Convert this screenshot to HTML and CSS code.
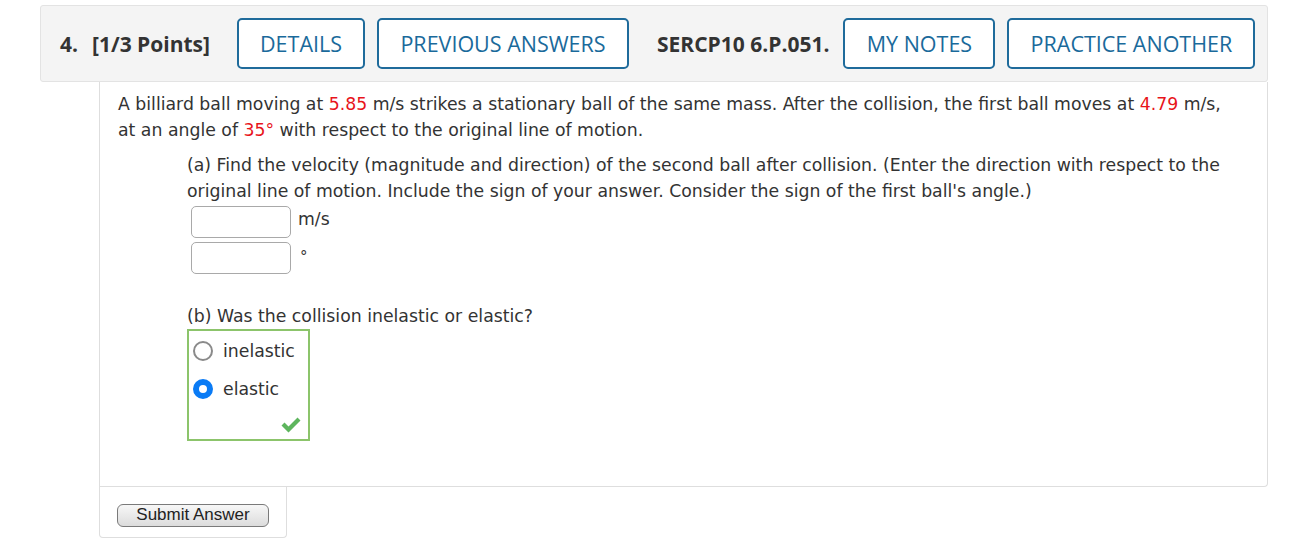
FILE: index.html
```html
<!DOCTYPE html>
<html>
<head>
<meta charset="utf-8">
<link rel="stylesheet" href="styles.css">
</head>
<body>
<div class="question">
  <div class="qhead">
    <span class="qnum">4.</span>
    <span class="qpts">[1/3 Points]</span>
    <span class="btn btn-details">DETAILS</span>
    <span class="btn btn-prev">PREVIOUS ANSWERS</span>
    <span class="qcode">SERCP10 6.P.051.</span>
    <span class="btn btn-notes">MY NOTES</span>
    <span class="btn btn-practice">PRACTICE ANOTHER</span>
  </div>
  <div class="qbody">
    <p class="stem">A billiard ball moving at <span class="red">5.85</span> m/s strikes a stationary ball of the same mass. After the collision, the first ball moves at <span class="red">4.79</span> m/s, at an angle of <span class="red">35°</span> with respect to the original line of motion.</p>
    <div class="part">
      <p class="ptext">(a) Find the velocity (magnitude and direction) of the second ball after collision. (Enter the direction with respect to the original line of motion. Include the sign of your answer. Consider the sign of the first ball's angle.)</p>
      <div class="ansrow"><span class="inp"></span><span class="unit">m/s</span></div>
      <div class="ansrow"><span class="inp"></span><span class="unit deg">°</span></div>
      <p class="ptext pb">(b) Was the collision inelastic or elastic?</p>
      <div class="choices">
        <div class="choice"><span class="radio"></span><span class="clabel">inelastic</span></div>
        <div class="choice"><span class="radio on"></span><span class="clabel">elastic</span></div>
        <svg class="check" width="22" height="18" viewBox="0 0 22 18"><path d="M1.5 9.5 L4.5 6.5 L8.5 10.5 L17.5 1.5 L20.5 4.5 L8.5 16.5 Z" fill="#5db55d"/></svg>
      </div>
    </div>
  </div>
  <div class="qfoot">
    <span class="submit">Submit Answer</span>
  </div>
</div>
</body>
</html>
```

FILE: styles.css
```css
html, body {
  margin: 0;
  padding: 0;
  background: #fff;
}
.question {
  padding-top: 5px;
  width: 1290px;
}
.qhead {
  margin-left: 40px;
  width: 1226px;
  height: 75px;
  box-sizing: content-box;
  background: #f4f4f4;
  border: 1px solid #e3e3e3;
  border-radius: 3px;
  display: flex;
  align-items: center;
  font-family: "Open Sans", sans-serif;
  color: #333;
}
.qnum {
  font-weight: 700;
  font-size: 21px;
  margin-left: 19px;
}
.qpts {
  font-weight: 700;
  font-size: 21px;
  margin-left: 14px;
  margin-right: 27px;
}
.qcode {
  font-weight: 700;
  font-size: 21px;
  margin-left: 28px;
  margin-right: 14px;
}
.btn {
  box-sizing: border-box;
  height: 51px;
  border: 2px solid #1f6b9b;
  border-radius: 5px;
  color: #1a6a9b;
  font-size: 21.5px;
  display: flex;
  align-items: center;
  justify-content: center;
  background: #fff;
}
.btn-details { width: 128px; }
.btn-prev { width: 252px; margin-left: 12px; }
.btn-notes { width: 152px; }
.btn-practice { width: 248px; margin-left: 12px; }

.qbody {
  margin-left: 99px;
  width: 1149px;
  border-left: 1px solid #dedede;
  border-right: 1px solid #dedede;
  border-bottom: 1px solid #dedede;
  border-bottom-right-radius: 4px;
  padding: 9px 0 45px 18px;
  box-sizing: content-box;
  font-family: "DejaVu Sans", Verdana, sans-serif;
  font-size: 17.3px;
  line-height: 26px;
  color: #333;
}
.qbody p { margin: 0; }
.red { color: #e8141b; }
.qbody .stem { padding-right: 25px; }
.part {
  margin-left: 69px;
  margin-top: 9px;
}
.qbody .ptext { padding-right: 40px; }
.ansrow {
  display: flex;
  align-items: flex-start;
  margin-left: 4px;
  margin-top: 2px;
  height: 32px;
}
.ansrow + .ansrow { margin-top: 4px; }
.inp {
  box-sizing: border-box;
  width: 100px;
  height: 32px;
  border: 1px solid #a9a9a9;
  border-radius: 5px;
  background: #fff;
}
.unit {
  margin-left: 7px;
  line-height: 26px;
}
.deg { margin-left: 9px; font-size: 15px; line-height: 30px; }
.qbody .pb { margin-top: 29px; }
.choices {
  position: relative;
  box-sizing: border-box;
  width: 123px;
  height: 112px;
  border: 2px solid #8cc46b;
  padding-top: 7px;
}
.choice {
  display: flex;
  align-items: center;
  height: 26px;
  margin-left: 4px;
}
.choice + .choice { margin-top: 12px; }
.radio {
  box-sizing: border-box;
  width: 20px;
  height: 20px;
  border-radius: 50%;
  border: 2px solid #8a8a8a;
  background: #fff;
}
.radio.on {
  border: 6px solid #0a7bf5;
}
.clabel { margin-left: 10px; }
.check {
  position: absolute;
  right: 6px;
  bottom: 5px;
}
.qfoot {
  margin-left: 99px;
  width: 186px;
  height: 50px;
  border-left: 1px solid #dedede;
  border-right: 1px solid #dedede;
  border-bottom: 1px solid #dedede;
  border-bottom-left-radius: 4px;
  border-bottom-right-radius: 4px;
  display: flex;
  align-items: center;
}
.submit {
  box-sizing: border-box;
  margin-left: 17px;
  margin-top: 6px;
  width: 152px;
  height: 23px;
  border: 1px solid #7a7a7a;
  border-radius: 6px;
  background: linear-gradient(#f7f7f7, #dcdcdc);
  font-family: "Liberation Sans", Arial, sans-serif;
  font-size: 17px;
  color: #222;
  display: flex;
  align-items: center;
  justify-content: center;
}
```
